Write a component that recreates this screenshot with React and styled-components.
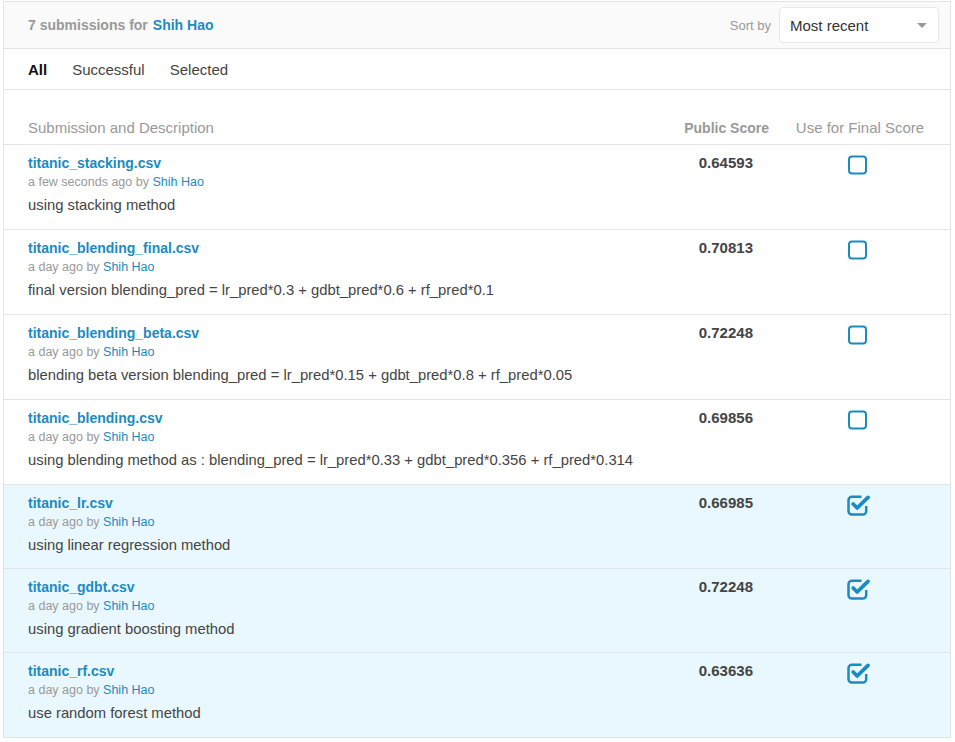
import React from "react";
import styled, { createGlobalStyle } from "styled-components";

const GlobalStyle = createGlobalStyle`
  body {
    margin: 0;
    background: #fff;
    font-family: "Liberation Sans", Arial, sans-serif;
    color: #444;
  }
`;

const BLUE = "#1b8bc0";

const Panel = styled.div`
  margin: 1px 0 0 3px;
  width: 946px;
  border: 1px solid #e4e4e4;
  border-bottom: none;
`;

const Header = styled.div`
  height: 46px;
  background: #fafafa;
  display: flex;
  align-items: center;
  justify-content: space-between;
  padding: 0 11px 0 24px;
  border-bottom: 1px solid #e4e4e4;
`;

const Title = styled.div`
  font-size: 14px;
  font-weight: bold;
  color: #999;
  span {
    color: ${BLUE};
    margin-left: 5px;
  }
`;

const SortBox = styled.div`
  display: flex;
  align-items: center;
  gap: 8px;
`;

const SortLabel = styled.span`
  font-size: 13px;
  color: #999;
`;

const Select = styled.div`
  width: 160px;
  height: 36px;
  box-sizing: border-box;
  border: 1px solid #e8e8e8;
  border-radius: 4px;
  background: #fff;
  display: flex;
  align-items: center;
  justify-content: space-between;
  padding: 0 11px 0 10px;
  font-size: 15px;
  color: #333;
`;

const Caret = styled.span`
  width: 0;
  height: 0;
  border-left: 5px solid transparent;
  border-right: 5px solid transparent;
  border-top: 5px solid #999;
`;

const Tabs = styled.div`
  height: 40px;
  display: flex;
  align-items: center;
  gap: 25px;
  padding-left: 24px;
  border-bottom: 1px solid #e4e4e4;
`;

const Tab = styled.span`
  font-size: 15px;
  color: ${(p) => (p.$active ? "#111" : "#444")};
  font-weight: ${(p) => (p.$active ? "bold" : "normal")};
`;

const Grid = styled.div`
  display: grid;
  grid-template-columns: 1fr 130px 160px;
  padding: 0 11px 0 24px;
  align-items: start;
`;

const HeadRow = styled(Grid)`
  height: 55px;
  align-items: end;
  padding-bottom: 8px;
  box-sizing: border-box;
  border-bottom: 1px solid #e4e4e4;
  font-size: 15px;
  color: #999;
`;

const HeadScore = styled.div`
  text-align: right;
  font-weight: bold;
  font-size: 14px;
  padding-right: 10px;
`;

const HeadFinal = styled.div`
  text-align: center;
  padding-left: 2px;
`;

const Row = styled(Grid)`
  height: ${(p) => (p.$short ? 84 : 85)}px;
  box-sizing: border-box;
  padding-top: 9px;
  border-bottom: 1px solid #e4e4e4;
  background: ${(p) => (p.$selected ? "#e9f8fe" : "#fff")};
`;

const FileName = styled.div`
  font-size: 14px;
  font-weight: bold;
  color: ${BLUE};
  line-height: 18px;
`;

const Meta = styled.div`
  font-size: 12.5px;
  color: #999;
  line-height: 17px;
  margin-top: 2px;
  span {
    color: ${BLUE};
  }
`;

const Desc = styled.div`
  font-size: 14.8px;
  color: #444;
  margin-top: 5px;
  line-height: 19px;
`;

const Score = styled.div`
  text-align: right;
  font-size: 15px;
  font-weight: bold;
  color: #444;
  padding-right: 26px;
  line-height: 18px;
`;

const CheckCell = styled.div`
  display: flex;
  justify-content: center;
  padding-right: 2px;
`;

const Checkbox = ({ checked }) =>
  checked ? (
    <svg width="24" height="22" viewBox="0 0 24 22" style={{ marginLeft: 2 }}>
      <path
        d="M14.5 2.8 H4.8 a3.3 3.3 0 0 0 -3.3 3.3 V17.2 a3.3 3.3 0 0 0 3.3 3.3 H15.9 a3.3 3.3 0 0 0 3.3 -3.3 V12"
        fill="none"
        stroke={BLUE}
        strokeWidth="2.5"
      />
      <path
        d="M6.2 10 L10.2 14 L21 3.4"
        fill="none"
        stroke={BLUE}
        strokeWidth="3.8"
        strokeLinecap="round"
        strokeLinejoin="round"
      />
    </svg>
  ) : (
    <svg width="24" height="22" viewBox="0 0 24 22">
      <rect x="3" y="2.5" width="17" height="17" rx="3" fill="none" stroke={BLUE} strokeWidth="2" />
    </svg>
  );

const rows = [
  { file: "titanic_stacking.csv", when: "a few seconds ago", desc: "using stacking method", score: "0.64593", sel: false },
  { file: "titanic_blending_final.csv", when: "a day ago", desc: "final version blending_pred = lr_pred*0.3 + gdbt_pred*0.6 + rf_pred*0.1", score: "0.70813", sel: false },
  { file: "titanic_blending_beta.csv", when: "a day ago", desc: "blending beta version blending_pred = lr_pred*0.15 + gdbt_pred*0.8 + rf_pred*0.05", score: "0.72248", sel: false },
  { file: "titanic_blending.csv", when: "a day ago", desc: "using blending method as : blending_pred = lr_pred*0.33 + gdbt_pred*0.356 + rf_pred*0.314", score: "0.69856", sel: false },
  { file: "titanic_lr.csv", when: "a day ago", desc: "using linear regression method", score: "0.66985", sel: true, short: true },
  { file: "titanic_gdbt.csv", when: "a day ago", desc: "using gradient boosting method", score: "0.72248", sel: true, short: true },
  { file: "titanic_rf.csv", when: "a day ago", desc: "use random forest method", score: "0.63636", sel: true },
];

export default function App() {
  return (
    <>
      <GlobalStyle />
      <Panel>
        <Header>
          <Title>
            7 submissions for<span>Shih Hao</span>
          </Title>
          <SortBox>
            <SortLabel>Sort by</SortLabel>
            <Select>
              Most recent
              <Caret />
            </Select>
          </SortBox>
        </Header>
        <Tabs>
          <Tab $active>All</Tab>
          <Tab>Successful</Tab>
          <Tab>Selected</Tab>
        </Tabs>
        <HeadRow>
          <div>Submission and Description</div>
          <HeadScore>Public Score</HeadScore>
          <HeadFinal>Use for Final Score</HeadFinal>
        </HeadRow>
        {rows.map((r, i) => (
          <Row key={i} $selected={r.sel} $short={r.short}>
            <div>
              <FileName>{r.file}</FileName>
              <Meta>
                {r.when} by <span>Shih Hao</span>
              </Meta>
              <Desc>{r.desc}</Desc>
            </div>
            <Score>{r.score}</Score>
            <CheckCell>
              <Checkbox checked={r.sel} />
            </CheckCell>
          </Row>
        ))}
      </Panel>
    </>
  );
}
